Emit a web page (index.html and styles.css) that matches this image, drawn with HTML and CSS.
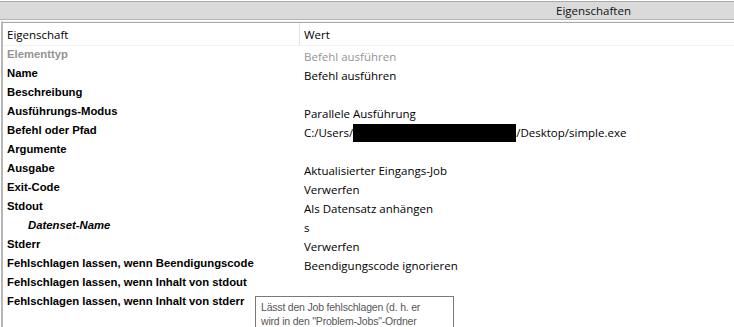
FILE: index.html
```html
<!DOCTYPE html>
<html lang="de">
<head>
  <meta charset="utf-8">
  <title>Eigenschaften</title>
  <link rel="stylesheet" href="styles.css">
</head>
<body>

<div class="titlebar">
  <span class="title">Eigenschaften</span>
</div>

<div class="panel">
  <div class="head">
    <div class="head-cell">Eigenschaft</div>
    <div class="head-cell value-head">Wert</div>
  </div>

  <div class="rows">
    <div class="label muted">Elementtyp</div>
    <div class="value muted">Befehl ausführen</div>

    <div class="label">Name</div>
    <div class="value">Befehl ausführen</div>

    <div class="label">Beschreibung</div>
    <div class="value"></div>

    <div class="label">Ausführungs-Modus</div>
    <div class="value">Parallele Ausführung</div>

    <div class="label">Befehl oder Pfad</div>
    <div class="value">C:/Users/<span class="redacted"></span>/Desktop/simple.exe</div>

    <div class="label">Argumente</div>
    <div class="value"></div>

    <div class="label">Ausgabe</div>
    <div class="value">Aktualisierter Eingangs-Job</div>

    <div class="label">Exit-Code</div>
    <div class="value">Verwerfen</div>

    <div class="label">Stdout</div>
    <div class="value">Als Datensatz anhängen</div>

    <div class="label sub">Datenset-Name</div>
    <div class="value">s</div>

    <div class="label">Stderr</div>
    <div class="value">Verwerfen</div>

    <div class="label">Fehlschlagen lassen, wenn Beendigungscode</div>
    <div class="value">Beendigungscode ignorieren</div>

    <div class="label">Fehlschlagen lassen, wenn Inhalt von stdout</div>
    <div class="value"></div>

    <div class="label">Fehlschlagen lassen, wenn Inhalt von stderr</div>
    <div class="value"></div>
  </div>

  <!-- hover hint for the last row -->
  <div class="tooltip">
    Lässt den Job fehlschlagen (d. h. er<br>
    wird in den "Problem-Jobs"-Ordner
  </div>
</div>

</body>
</html>
```

FILE: styles.css
```css
body {
  margin: 0;
  background: #ffffff;
  font-family: "Liberation Sans", Arial, sans-serif;
  overflow: hidden;
  height: 327px;
}

/* Window title strip */
.titlebar {
  margin-top: 1px;
  height: 17px;
  background: #dadada;
  border-top: 1px solid #a9a9a9;
  border-bottom: 1px solid #b4b4b4;
  display: flex;
  align-items: center;
  padding-left: 556px;
}

.title {
  font-family: "Open Sans", sans-serif;
  font-size: 11.5px;
  color: #111;
}

/* Table panel */
.panel {
  position: relative;
  height: 307px;
  margin-top: 1px;
  border-top: 1px solid #f4f4f4;
  box-shadow: inset 0 1px 0 #a9a9a9;
  border-left: 2px solid #b7b7b7;
  margin-left: 1px;
  padding-top: 1px;
}

.head {
  display: grid;
  grid-template-columns: 296px 1fr;
  height: 22px;
  border-bottom: 1px solid #f2f2f2;
}

.head-cell {
  font-family: "Open Sans", sans-serif;
  font-size: 11.5px;
  color: #000;
  padding-left: 4px;
  display: flex;
  align-items: center;
}

.value-head {
  border-left: 1px solid #e3e3e3;
}

.rows {
  display: grid;
  grid-template-columns: 301px 1fr;
  grid-auto-rows: 19px;
}

.label {
  font-weight: bold;
  font-size: 11.3px;
  color: #000;
  padding-left: 4px;
  line-height: 17px;
  white-space: nowrap;
}

.label.sub {
  font-style: italic;
  padding-left: 25px;
}

.value {
  font-family: "Open Sans", sans-serif;
  font-size: 11.5px;
  color: #000;
  padding-top: 2px;
  line-height: 17px;
  white-space: nowrap;
}

.muted {
  color: #949494;
}

.redacted {
  display: inline-block;
  width: 163px;
  height: 18px;
  background: #000;
  vertical-align: -5px;
}

.tooltip {
  position: absolute;
  left: 252px;
  top: 274px;
  width: 192px;
  height: 40px;
  padding: 3px 0 0 5px;
  background: #fff;
  border: 1px solid #7a7a7a;
  font-size: 10.5px;
  letter-spacing: -0.2px;
  line-height: 14px;
  color: #575757;
  white-space: nowrap;
}
```
